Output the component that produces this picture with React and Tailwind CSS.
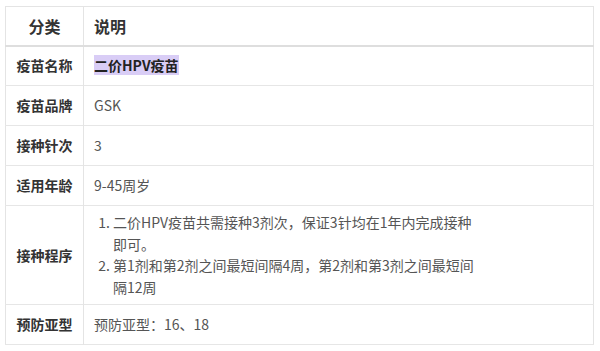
import React from "react";

const rows = [
  { label: "疫苗名称", value: <span className="bg-[#d9cdf6] font-bold text-[#222]">二价HPV疫苗</span> },
  { label: "疫苗品牌", value: "GSK" },
  { label: "接种针次", value: "3" },
  { label: "适用年龄", value: "9-45周岁" },
  {
    label: "接种程序",
    value: (
      <ol className="list-decimal pl-[19px] w-[386px] leading-[21.5px]">
        <li>二价HPV疫苗共需接种3剂次，保证3针均在1年内完成接种即可。</li>
        <li>第1剂和第2剂之间最短间隔4周，第2剂和第3剂之间最短间隔12周</li>
      </ol>
    ),
    tall: true,
  },
  { label: "预防亚型", value: "预防亚型：16、18" },
];

const App = () => {
  return (
    <div
      className="w-[600px] h-[351px] bg-white pt-[6px] pl-[5px]"
      style={{ fontFamily: '"Noto Sans CJK SC", "Noto Sans", sans-serif' }}
    >
      <table className="w-[589px] border-collapse border border-[#e4e4e4] text-[14px]">
        <thead>
          <tr className="h-[39px] border-b-2 border-[#dedede]">
            <th className="w-[78px] border-r border-[#e4e4e4] text-[16px] font-bold text-[#333] text-center">分类</th>
            <th className="pl-[10px] text-[16px] font-bold text-[#333] text-left">说明</th>
          </tr>
        </thead>
        <tbody>
          {rows.map((r) => (
            <tr
              key={r.label}
              className={(r.tall ? "h-[97px]" : "h-[40px]") + " border-b border-[#e6e6e6]"}
            >
              <td className="border-r border-[#e4e4e4] text-center font-bold text-[#333]">{r.label}</td>
              <td className={"pl-[10px] text-[#555] " + (r.tall ? "py-[6px]" : "")}>{r.value}</td>
            </tr>
          ))}
        </tbody>
      </table>
    </div>
  );
};

export default App;
